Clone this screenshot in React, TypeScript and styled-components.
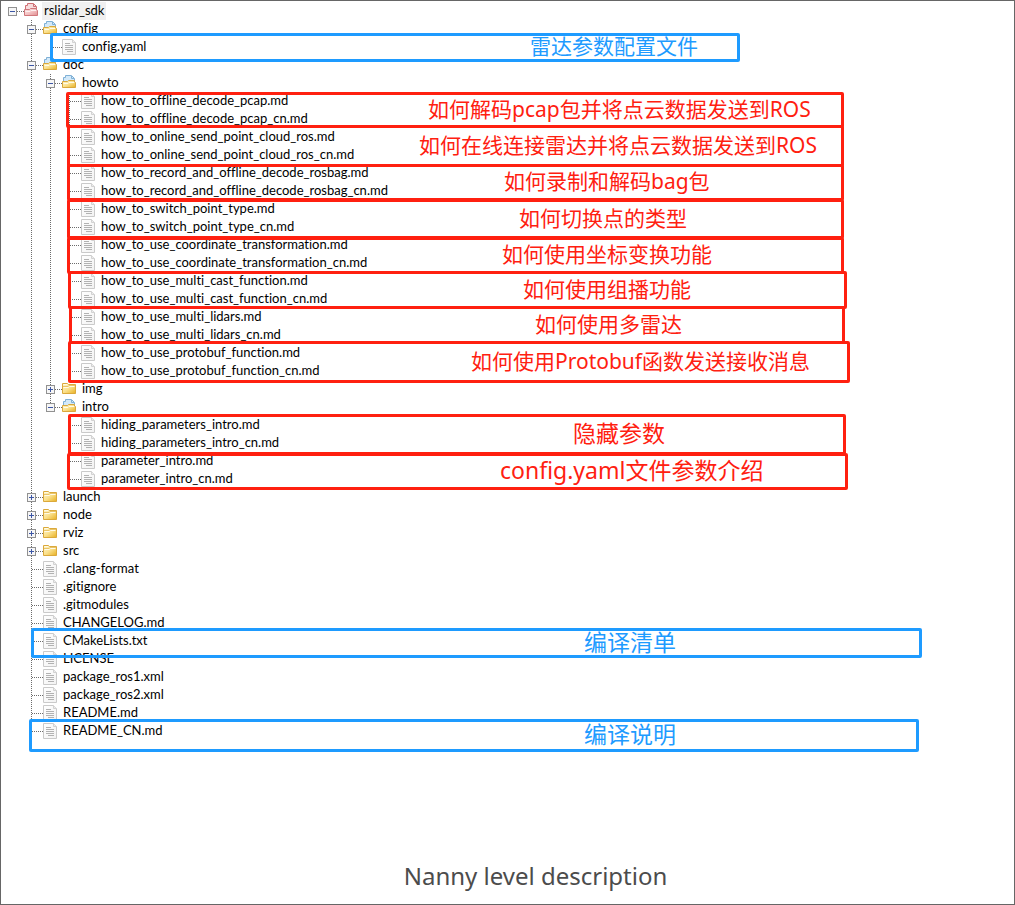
import React from "react";
import styled, { createGlobalStyle } from "styled-components";

const ROW = 18;
const INDENT = 19;
const RED = "#ff2010";
const BLUE = "#1e9bff";

const GlobalStyle = createGlobalStyle`
  *, *::before, *::after { box-sizing: border-box; }
  body {
    margin: 0;
    background: #fff;
    color: #000;
    font-family: "Noto Sans", "Noto Sans CJK SC", sans-serif;
  }
`;

const Page = styled.main`
  display: flex;
  flex-direction: column;
  min-height: 100vh;
  border: 1px solid #666;
`;

const Canvas = styled.div`
  position: relative;
`;

const Tree = styled.ul`
  list-style: none;
  margin: 0;
  padding: 1px 0 0 6px;
  font-family: Lato, "Noto Sans", sans-serif;
  font-size: 13px;
  font-variant-ligatures: none;
`;

const Branch = styled.ul`
  list-style: none;
  margin: 0;
  padding: 0 0 0 ${INDENT}px;
`;

const dots = (direction: string) =>
  `repeating-linear-gradient(${direction}, #6c6c6c 0 1px, transparent 1px 2px)`;

const Item = styled.li<{ $root: boolean; $last: boolean }>`
  background-image: ${(p) => (p.$root ? "none" : dots("to bottom"))};
  background-repeat: no-repeat;
  background-position: 5px 0;
  background-size: 1px ${(p) => (p.$last ? "10px" : "100%")};
`;

const Row = styled.div`
  display: flex;
  align-items: center;
  height: ${ROW}px;
`;

const Connector = styled.span`
  display: flex;
  align-items: center;
  flex: none;
  width: 17px;
  height: ${ROW}px;
  padding-left: 1px;
  background: ${dots("to right")} no-repeat 6px 9px / 11px 1px;
`;

const Toggle = styled.button`
  width: 9px;
  height: 9px;
  padding: 0;
  border: 0;
  background: none;
  line-height: 0;
`;

const IconBox = styled.span`
  flex: none;
  display: flex;
  width: 14px;
  height: 16px;
`;

const Name = styled.span<{ $selected: boolean }>`
  height: ${ROW}px;
  margin-left: 4px;
  padding: 0 2px;
  line-height: 16px;
  white-space: nowrap;
  background: ${(p) => (p.$selected ? "#f0f0f0" : "transparent")};
`;

const Callout = styled.div<{
  $x: number;
  $y: number;
  $w: number;
  $h: number;
  $color: string;
  $start: number;
  $large: boolean;
}>`
  position: absolute;
  left: ${(p) => p.$x}px;
  top: ${(p) => p.$y}px;
  width: ${(p) => p.$w}px;
  height: ${(p) => p.$h}px;
  display: flex;
  align-items: center;
  padding: 0 0 3px ${(p) => p.$start}px;
  border: 3px solid ${(p) => p.$color};
  border-radius: 2px;
  color: ${(p) => p.$color};
  font-size: ${(p) => (p.$large ? 23 : 21)}px;
  line-height: 20px;
  white-space: nowrap;
`;

const Caption = styled.p`
  margin: auto 0 0;
  padding: 100px 0 11px 56px;
  color: #4c4c4c;
  font-size: 24px;
  line-height: 34px;
  text-align: center;
`;

const GradientDefs = styled.svg`
  display: block;
`;

const IconGradients = () => (
  <GradientDefs width="0" height="0" aria-hidden="true">
    <defs>
      <linearGradient id="gold" x1="0" y1="0" x2="1" y2="1">
        <stop offset="0" stopColor="#fff6cf" />
        <stop offset=".5" stopColor="#fae08c" />
        <stop offset="1" stopColor="#e8b021" />
      </linearGradient>
      <linearGradient id="rose" x1="0" y1="0" x2="1" y2="1">
        <stop offset="0" stopColor="#fbe6e6" />
        <stop offset=".5" stopColor="#f3c2c3" />
        <stop offset="1" stopColor="#e08d90" />
      </linearGradient>
      <linearGradient id="sheet" x1="0" y1="0" x2="1" y2="1">
        <stop offset="0" stopColor="#ffffff" />
        <stop offset="1" stopColor="#f2f2f2" />
      </linearGradient>
    </defs>
  </GradientDefs>
);

const FileIcon = () => (
  <svg width="14" height="16" viewBox="0 0 14 16" aria-hidden="true">
    <path d="M.5 .5H10.500L13.500 3.500V15.500H.5Z" fill="url(#sheet)" stroke="#cacaca" />
    <path d="M10.500 .5V3.500H13.500" fill="#ececec" stroke="#d2d2d2" />
    <path d="M3 4.500H8M3 6.500H11M3 8.500H11M3 10.500H11M5 12.500H11" stroke="#b2b2b2" />
  </svg>
);

const ClosedFolder = () => (
  <svg width="14" height="16" viewBox="0 0 14 16" aria-hidden="true">
    <path d="M.5 12.500V2.500H5.500L6.500 3.500H13.500V12.500Z" fill="url(#gold)" stroke="#dba93b" />
    <path d="M1.500 3.500H5M1.500 6.500H6.500L7.500 5.500H12.500" stroke="#fffbe8" fill="none" />
    <path d="M1 5.500H6L7 4.500H13" stroke="#e9c469" fill="none" />
  </svg>
);

const OpenFolder = ({ red = false }: { red?: boolean }) => {
  const paper = red ? "#cf6f73" : "#7fb0d6";
  const edge = red ? "#d0777b" : "#d9a83c";
  return (
    <svg width="14" height="16" viewBox="0 0 14 16" aria-hidden="true">
      <path d="M1.500 8V2.500H3.500V.5H9.500L12.500 3.500V8Z" fill={red ? "#f7dcdd" : "#d3e9f9"} stroke={paper} />
      <path d="M9.500 1V3.500H12" fill="none" stroke={paper} />
      <path
        d="M.5 12.500V6.500H5.500L6.500 5.500H12.500V7.500H13.500V12.500Z"
        fill={red ? "url(#rose)" : "url(#gold)"}
        stroke={edge}
      />
      <path d="M1.500 8.500H6L7 7.500H12.500" stroke={red ? "#fdf1f1" : "#fffbe8"} fill="none" />
    </svg>
  );
};

const ToggleIcon = ({ open }: { open: boolean }) => (
  <svg width="9" height="9" viewBox="0 0 9 9" aria-hidden="true">
    <rect x=".5" y=".5" width="8" height="8" fill="#f6f6f6" stroke="#919191" />
    <path d={open ? "M2 4.500H7" : "M2 4.500H7M4.500 2V7"} stroke="#3c56a5" />
  </svg>
);

type Node = { name: string; open?: boolean; children?: Node[] };

const file = (name: string): Node => ({ name });
const pair = (name: string): Node[] => [file(`${name}.md`), file(`${name}_cn.md`)];
const closed = (name: string): Node => ({ name, open: false, children: [] });

const root: Node = {
  name: "rslidar_sdk",
  open: true,
  children: [
    { name: "config", open: true, children: [file("config.yaml")] },
    {
      name: "doc",
      open: true,
      children: [
        {
          name: "howto",
          open: true,
          children: [
            "how_to_offline_decode_pcap",
            "how_to_online_send_point_cloud_ros",
            "how_to_record_and_offline_decode_rosbag",
            "how_to_switch_point_type",
            "how_to_use_coordinate_transformation",
            "how_to_use_multi_cast_function",
            "how_to_use_multi_lidars",
            "how_to_use_protobuf_function",
          ].flatMap(pair),
        },
        closed("img"),
        {
          name: "intro",
          open: true,
          children: ["hiding_parameters_intro", "parameter_intro"].flatMap(pair),
        },
      ],
    },
    ...["launch", "node", "rviz", "src"].map(closed),
    ...[
      ".clang-format",
      ".gitignore",
      ".gitmodules",
      "CHANGELOG.md",
      "CMakeLists.txt",
      "LICENSE",
      "package_ros1.xml",
      "package_ros2.xml",
      "README.md",
      "README_CN.md",
    ].map(file),
  ],
};

const callouts = [
  { x: 49, y: 32, w: 690, h: 29, start: 477, color: BLUE, text: "雷达参数配置文件" },
  { x: 65, y: 91, w: 778, h: 36, start: 359, color: RED, text: "如何解码pcap包并将点云数据发送到ROS" },
  { x: 66, y: 124, w: 777, h: 42, start: 349, color: RED, text: "如何在线连接雷达并将点云数据发送到ROS" },
  { x: 66, y: 163, w: 777, h: 37, start: 434, color: RED, text: "如何录制和解码bag包" },
  { x: 66, y: 198, w: 777, h: 40, start: 449, color: RED, text: "如何切换点的类型" },
  { x: 66, y: 236, w: 777, h: 37, start: 432, color: RED, text: "如何使用坐标变换功能" },
  { x: 67, y: 270, w: 779, h: 38, start: 452, color: RED, text: "如何使用组播功能" },
  { x: 68, y: 305, w: 776, h: 38, start: 463, color: RED, text: "如何使用多雷达" },
  { x: 67, y: 340, w: 782, h: 42, start: 400, color: RED, text: "如何使用Protobuf函数发送接收消息" },
  { x: 67, y: 413, w: 778, h: 41, start: 502, color: RED, text: "隐藏参数", large: true },
  { x: 66, y: 452, w: 781, h: 37, start: 430, color: RED, text: "config.yaml文件参数介绍", large: true },
  { x: 30, y: 627, w: 891, h: 30, start: 550, color: BLUE, text: "编译清单", large: true },
  { x: 28, y: 718, w: 890, h: 33, start: 552, color: BLUE, text: "编译说明", large: true },
];

function TreeItem({ node, isRoot = false, last = false }: { node: Node; isRoot?: boolean; last?: boolean }) {
  const open = Boolean(node.open);
  return (
    <Item $root={isRoot} $last={last}>
      <Row>
        <Connector>
          {node.children && (
            <Toggle type="button" aria-expanded={open} aria-label={node.name}>
              <ToggleIcon open={open} />
            </Toggle>
          )}
        </Connector>
        <IconBox>
          {!node.children ? <FileIcon /> : open ? <OpenFolder red={isRoot} /> : <ClosedFolder />}
        </IconBox>
        <Name $selected={isRoot}>{node.name}</Name>
      </Row>
      {open && node.children && (
        <Branch>
          {node.children.map((child, i) => (
            <TreeItem key={child.name} node={child} last={i === node.children!.length - 1} />
          ))}
        </Branch>
      )}
    </Item>
  );
}

export default function App() {
  return (
    <>
      <GlobalStyle />
      <Page>
        <IconGradients />
        <Canvas>
          <Tree>
            <TreeItem node={root} isRoot last />
          </Tree>
          {callouts.map((c) => (
            <Callout
              key={c.text}
              $x={c.x}
              $y={c.y}
              $w={c.w}
              $h={c.h}
              $color={c.color}
              $start={c.start}
              $large={Boolean(c.large)}
            >
              {c.text}
            </Callout>
          ))}
        </Canvas>
        <Caption>Nanny level description</Caption>
      </Page>
    </>
  );
}
